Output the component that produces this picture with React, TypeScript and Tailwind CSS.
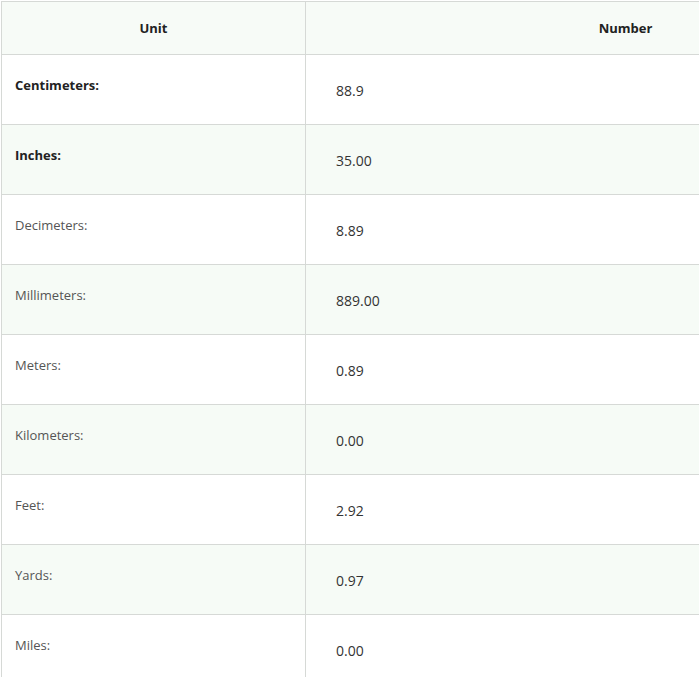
import React from 'react'

const rows = [
  { unit: 'Centimeters:', value: '88.9', bold: true },
  { unit: 'Inches:', value: '35.00', bold: true },
  { unit: 'Decimeters:', value: '8.89' },
  { unit: 'Millimeters:', value: '889.00' },
  { unit: 'Meters:', value: '0.89' },
  { unit: 'Kilometers:', value: '0.00' },
  { unit: 'Feet:', value: '2.92' },
  { unit: 'Yards:', value: '0.97' },
  { unit: 'Miles:', value: '0.00' },
]

export default function App() {
  return (
    <div className="w-[699px] h-[677px] overflow-hidden bg-white pt-[1px] pl-[1px] font-['Open_Sans',sans-serif]">
      <table className="w-[945px] border-collapse table-fixed">
        <colgroup>
          <col className="w-[304px]" />
          <col />
        </colgroup>
        <thead>
          <tr className="h-[53px] bg-[#f7fbf7]">
            <th className="border border-[#d6d9d6] pt-[1px] text-[13px] font-bold text-[#222] text-center">Unit</th>
            <th className="border border-[#d6d9d6] pt-[1px] text-[13px] font-bold text-[#222] text-center">Number</th>
          </tr>
        </thead>
        <tbody>
          {rows.map((r, i) => (
            <tr key={r.unit} className={`h-[70px] ${i % 2 === 1 ? 'bg-[#f6fbf6]' : 'bg-white'}`}>
              <td
                className={`border border-[#d6d9d6] align-top pl-[13px] pt-[21px] text-[13px] ${
                  r.bold ? 'font-bold text-[#222]' : 'text-[#555]'
                }`}
              >
                {r.unit}
              </td>
              <td className="border border-[#d6d9d6] align-top pl-[30px] pt-[25px] text-[14px] text-[#333]">
                {r.value}
              </td>
            </tr>
          ))}
        </tbody>
      </table>
    </div>
  )
}
